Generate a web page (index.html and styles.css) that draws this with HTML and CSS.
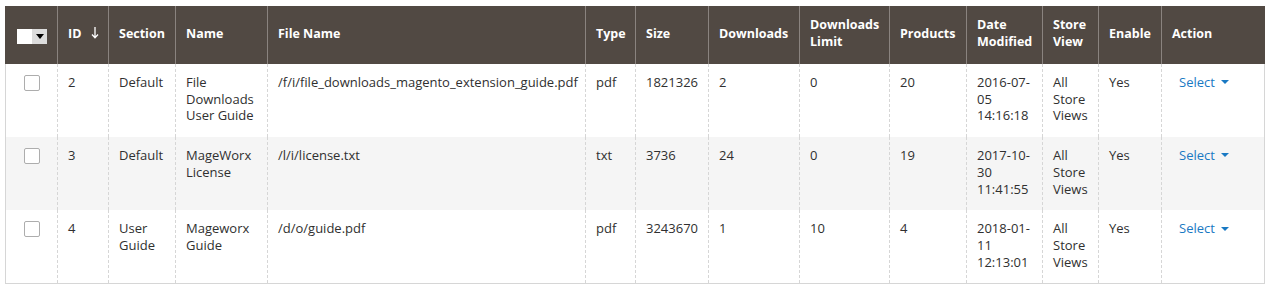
FILE: index.html
```html
<!DOCTYPE html>
<html lang="en">
<head>
<meta charset="utf-8">
<title>Downloads Grid</title>
<link rel="stylesheet" href="styles.css">
</head>
<body>
<table class="data-grid">
  <colgroup>
    <col class="c-check"><col class="c-id"><col class="c-section"><col class="c-name"><col class="c-file"><col class="c-type"><col class="c-size"><col class="c-dl"><col class="c-limit"><col class="c-products"><col class="c-date"><col class="c-store"><col class="c-enable"><col class="c-action">
  </colgroup>
  <thead>
    <tr>
      <th class="th-check">
        <span class="multiselect"><span class="ms-box"></span><span class="ms-toggle"><span class="ms-arrow"></span></span></span>
      </th>
      <th><span class="th-id">ID <svg class="sort-arrow" width="8" height="13" viewBox="0 0 8 13"><path d="M4 1v10.5M1 8.5l3 3.2 3-3.2" fill="none" stroke="#fff" stroke-width="1.3"/></svg></span></th>
      <th>Section</th>
      <th>Name</th>
      <th>File Name</th>
      <th>Type</th>
      <th>Size</th>
      <th>Downloads</th>
      <th>Downloads Limit</th>
      <th>Products</th>
      <th>Date Modified</th>
      <th>Store View</th>
      <th>Enable</th>
      <th>Action</th>
    </tr>
  </thead>
  <tbody>
    <tr>
      <td class="td-check"><span class="checkbox"></span></td>
      <td>2</td>
      <td>Default</td>
      <td>File Downloads User Guide</td>
      <td class="nowrap">/f/i/file_downloads_magento_extension_guide.pdf</td>
      <td>pdf</td>
      <td class="nowrap">1821326</td>
      <td>2</td>
      <td>0</td>
      <td>20</td>
      <td>2016-07-05 14:16:18</td>
      <td>All Store Views</td>
      <td>Yes</td>
      <td><a class="action-select" href="#">Select <span class="caret"></span></a></td>
    </tr>
    <tr>
      <td class="td-check"><span class="checkbox"></span></td>
      <td>3</td>
      <td>Default</td>
      <td>MageWorx License</td>
      <td class="nowrap">/l/i/license.txt</td>
      <td>txt</td>
      <td class="nowrap">3736</td>
      <td>24</td>
      <td>0</td>
      <td>19</td>
      <td>2017-10-30 11:41:55</td>
      <td>All Store Views</td>
      <td>Yes</td>
      <td><a class="action-select" href="#">Select <span class="caret"></span></a></td>
    </tr>
    <tr>
      <td class="td-check"><span class="checkbox"></span></td>
      <td>4</td>
      <td>User Guide</td>
      <td>Mageworx Guide</td>
      <td class="nowrap">/d/o/guide.pdf</td>
      <td>pdf</td>
      <td class="nowrap">3243670</td>
      <td>1</td>
      <td>10</td>
      <td>4</td>
      <td>2018-01-11 12:13:01</td>
      <td>All Store Views</td>
      <td>Yes</td>
      <td><a class="action-select" href="#">Select <span class="caret"></span></a></td>
    </tr>
  </tbody>
</table>
</body>
</html>
```

FILE: styles.css
```css
html, body {
  margin: 0;
  background: #fff;
}
body {
  padding: 6px 5px;
  font-family: "Open Sans", "Liberation Sans", sans-serif;
  color: #303030;
}
.data-grid {
  width: 1259px;
  table-layout: fixed;
  border-collapse: collapse;
  border: 1px solid #d6d6d6;
  border-top: 0;
}
.c-check { width: 52px; }
.c-id { width: 51px; }
.c-section { width: 67px; }
.c-name { width: 92px; }
.c-file { width: 318px; }
.c-type { width: 50px; }
.c-size { width: 73px; }
.c-dl { width: 91px; }
.c-limit { width: 90px; }
.c-products { width: 77px; }
.c-date { width: 76px; }
.c-store { width: 56px; }
.c-enable { width: 63px; }
.c-action { width: 103px; }

.data-grid th {
  background: #514943;
  color: #fff;
  font-weight: 700;
  font-size: 12.5px;
  line-height: 17px;
  text-align: left;
  vertical-align: middle;
  padding: 10px 8px 14px 10px;
  height: 34px;
  border-left: 1px solid #8a837f;
  border-right: 1px solid #8a837f;
}
.data-grid th:first-child { border-left-color: #514943; }
.data-grid th:last-child { border-right-color: #514943; }
.data-grid th.th-check {
  text-align: center;
  padding: 12px 0 12px 1px;
}
.multiselect {
  display: inline-flex;
  width: 30px;
  height: 15px;
  vertical-align: middle;
}
.ms-box {
  width: 15px;
  background: #fff;
}
.ms-toggle {
  flex: 1;
  background: #dcdcdc;
  display: flex;
  align-items: center;
  justify-content: center;
}
.ms-arrow {
  width: 0;
  height: 0;
  border-left: 4px solid transparent;
  border-right: 4px solid transparent;
  border-top: 5px solid #000;
}
.th-id {
  display: inline-flex;
  align-items: center;
  gap: 10px;
}
.sort-arrow { display: block; margin-top: -2px; }

.data-grid td {
  font-size: 13px;
  line-height: 16.7px;
  vertical-align: top;
  padding: 10px 8px 13px 10px;
  border-left: 1px dashed #d6d6d6;
  border-right: 1px dashed #d6d6d6;
  overflow-wrap: break-word;
}
.data-grid td.nowrap { white-space: nowrap; }
.data-grid td:first-child { border-left: 1px solid #d6d6d6; }
.data-grid td:last-child { border-right: 1px solid #d6d6d6; }
.data-grid tbody tr:nth-child(even) td { background: #f5f5f5; }
.data-grid td.td-check { text-align: center; padding-left: 0; padding-right: 0; }
.checkbox {
  display: inline-block;
  width: 14px;
  height: 14px;
  border: 1px solid #adadad;
  border-radius: 2px;
  background: #fff;
  margin-top: 1px;
  vertical-align: top;
}
.action-select {
  display: inline-flex;
  align-items: center;
  gap: 6px;
  padding-left: 7px;
  color: #1979c3;
  text-decoration: none;
}
.caret {
  width: 0;
  height: 0;
  border-left: 4px solid transparent;
  border-right: 4px solid transparent;
  border-top: 4px solid #1979c3;
}
```
